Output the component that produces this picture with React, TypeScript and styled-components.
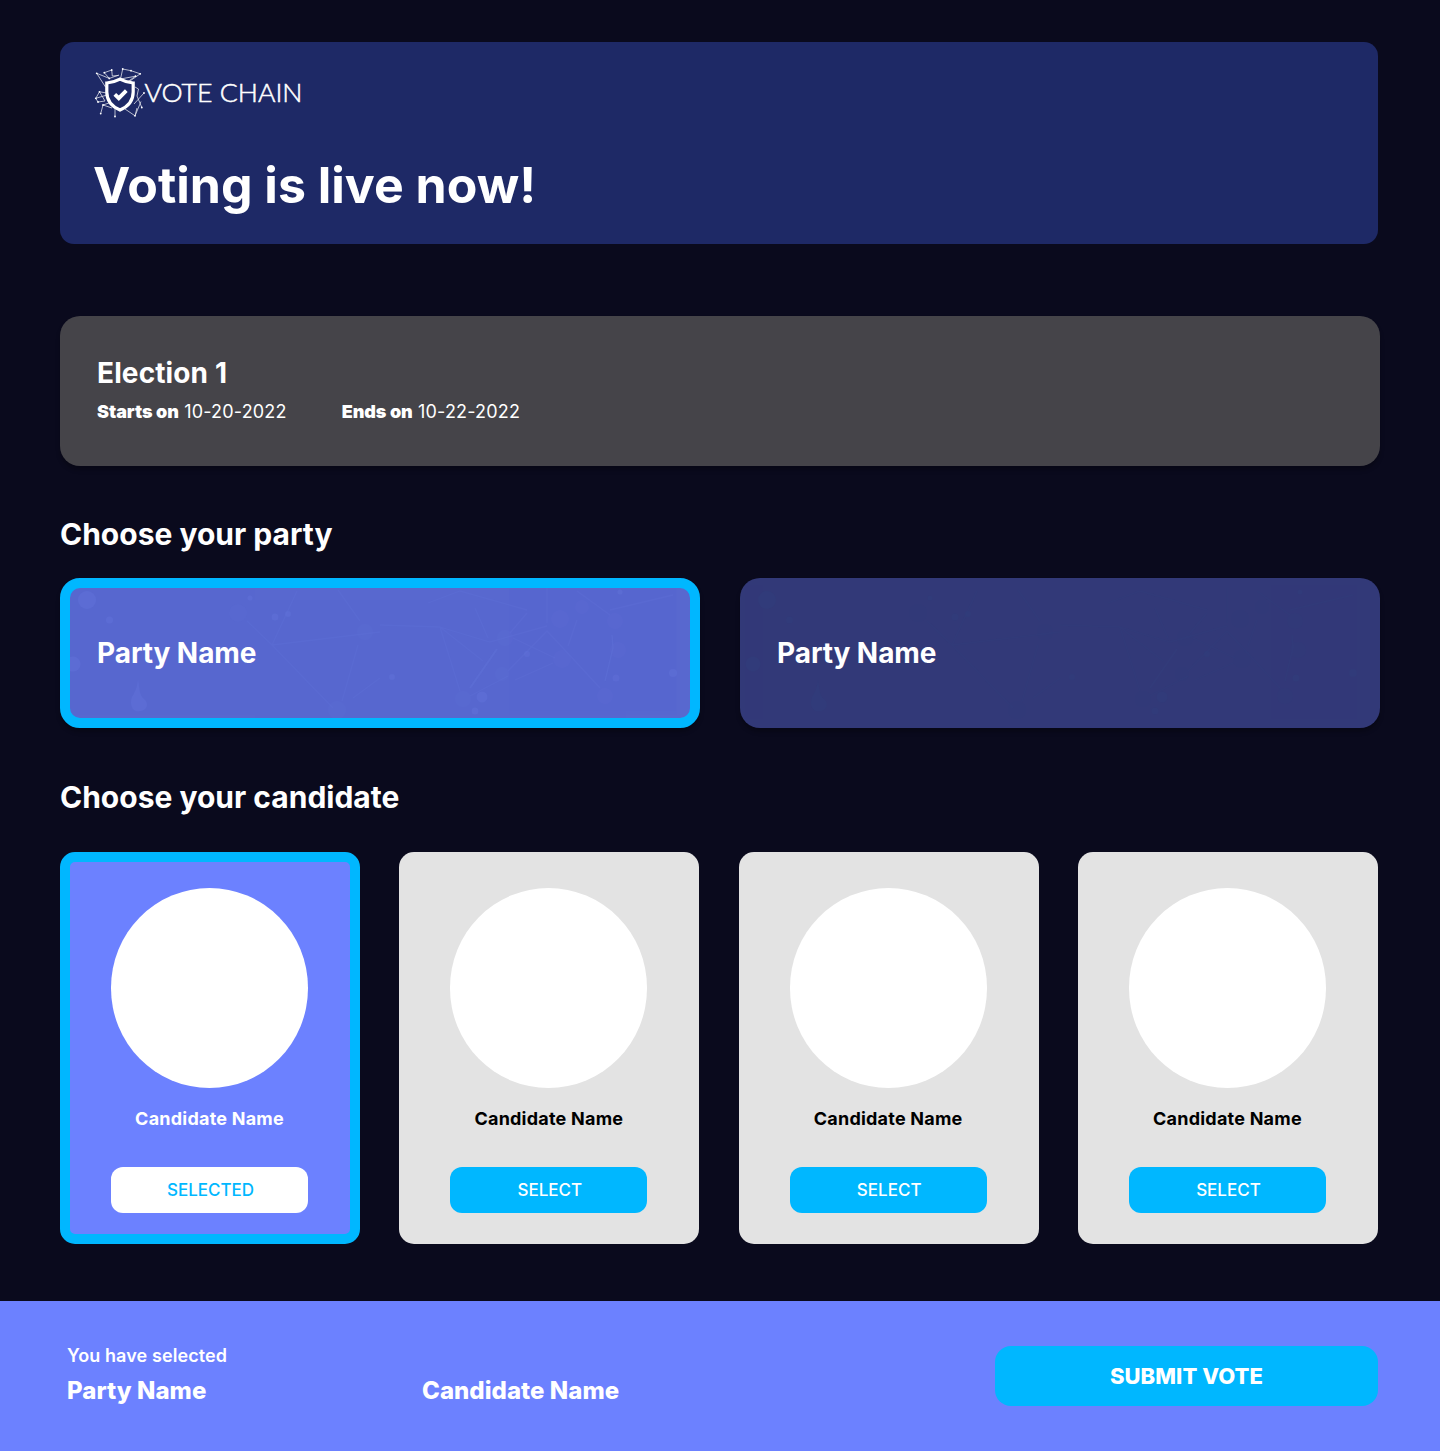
import React, { useState } from "react";
import styled, { createGlobalStyle } from "styled-components";

const GlobalStyle = createGlobalStyle`
  * { box-sizing: border-box; }
  body {
    margin: 0;
    background: #0a0a1d;
    color: #fff;
    font-family: Inter, "Liberation Sans", sans-serif;
  }
  h1, h2, h3, p { margin: 0; }
  button {
    font-family: inherit;
    border: 0;
    padding: 0;
    cursor: pointer;
  }
`;

const Page = styled.div`
  min-height: 1451px;
  display: flex;
  flex-direction: column;
`;

const Content = styled.main`
  width: 1440px;
  height: 1301px;
  padding: 42px 60px 0;
`;

const Hero = styled.header`
  width: 1318px;
  height: 202px;
  padding: 24px 34px 0;
  border-radius: 14px;
  background: #1e2966;
`;

const LogoSvg = styled.svg`
  display: block;
  width: 212px;
  height: 54px;
`;

const HeroTitle = styled.h1`
  margin: 34px 0 0 -1px;
  font-size: 50px;
  line-height: 62px;
  font-weight: 700;
  white-space: nowrap;
`;

const ElectionPanel = styled.section`
  height: 150px;
  margin-top: 72px;
  padding: 40px 37px 0;
  border-radius: 20px;
  background: #454449;
  box-shadow: 0 4px 4px rgba(0, 0, 0, 0.25);
`;

const PanelTitle = styled.h3`
  font-size: 28px;
  line-height: 34px;
  font-weight: 700;
`;

const ElectionTitle = styled(PanelTitle)`
  letter-spacing: 0.12px;
`;

const Dates = styled.div`
  display: flex;
  gap: 55px;
  margin-top: 11px;
  font-size: 18px;
  line-height: 22px;
  letter-spacing: 0.19px;

  b {
    font-weight: 900;
    letter-spacing: -0.06px;
  }
`;

const SectionTitle = styled.h2<{ $top: number }>`
  margin-top: ${(p) => p.$top}px;
  font-size: 30px;
  line-height: 36px;
  font-weight: 700;
`;

const Parties = styled.div`
  display: grid;
  grid-template-columns: 640px 640px;
  gap: 40px;
  margin-top: 26px;
`;

const PartyCard = styled.div<{ $selected: boolean }>`
  position: relative;
  display: flex;
  align-items: center;
  height: 150px;
  padding-left: ${(p) => (p.$selected ? 27 : 37)}px;
  border: ${(p) => (p.$selected ? "10px solid #00b7ff" : "0")};
  border-radius: 20px;
  background: ${(p) => (p.$selected ? "#5868cf" : "#323978")};
  box-shadow: 0 4px 4px rgba(0, 0, 0, 0.25);
  overflow: hidden;
  cursor: pointer;
`;

const Backdrop = styled.svg<{ $selected: boolean }>`
  position: absolute;
  left: ${(p) => (p.$selected ? -10 : 0)}px;
  top: ${(p) => (p.$selected ? -10 : 0)}px;
  width: 640px;
  height: 150px;
  opacity: ${(p) => (p.$selected ? 1 : 0.5)};
  color: ${(p) => (p.$selected ? "#5f71d8" : "#31427f")};
`;

const PartyName = styled(PanelTitle)`
  position: relative;
  letter-spacing: -0.08px;
`;

const Candidates = styled.div`
  display: flex;
  justify-content: space-between;
  width: 1318px;
  margin-top: 37px;
`;

const CandidateCard = styled.article<{ $selected: boolean }>`
  display: flex;
  flex-direction: column;
  align-items: center;
  width: 300px;
  height: 392px;
  padding-top: ${(p) => (p.$selected ? 26 : 36)}px;
  padding-right: 1px;
  border: ${(p) => (p.$selected ? "10px solid #00b7ff" : "0")};
  border-radius: 15px;
  background: ${(p) => (p.$selected ? "#6c81ff" : "#e3e3e3")};
  color: ${(p) => (p.$selected ? "#fff" : "#000")};
`;

const Portrait = styled.div`
  flex: none;
  width: 197px;
  height: 199.5px;
  border-radius: 50%;
  background: #fff;
`;

const CandidateName = styled.p`
  margin-top: 20.5px;
  font-size: 18px;
  line-height: 22px;
  font-weight: 700;
  letter-spacing: 0.22px;
`;

const SelectButton = styled.button<{ $selected: boolean }>`
  width: 197px;
  height: 46px;
  margin-top: 37px;
  padding: 0 0 1px 2px;
  border-radius: 12px;
  background: ${(p) => (p.$selected ? "#fff" : "#00b7ff")};
  color: ${(p) => (p.$selected ? "#00b7ff" : "#fff")};
  font-size: 17px;
  font-weight: 500;
`;

const Footer = styled.footer`
  display: flex;
  width: 1440px;
  height: 150px;
  padding: 44px 62px 0 67px;
  background: #6c81ff;
`;

const Choice = styled.div`
  display: flex;
  flex-direction: column;
  width: 355px;
`;

const ChoiceLabel = styled.p`
  height: 22px;
  font-size: 18px;
  line-height: 22px;
  font-weight: 600;
  letter-spacing: 0.1px;
`;

const ChoiceValue = styled.p`
  margin-top: 9px;
  font-size: 24px;
  line-height: 29px;
  font-weight: 800;
  letter-spacing: 0.05px;
`;

const SubmitButton = styled.button`
  width: 383px;
  height: 60px;
  margin: 1px 0 0 auto;
  border-radius: 16px;
  background: #00b7ff;
  color: #fff;
  font-size: 22px;
  font-weight: 800;
  letter-spacing: 0.05px;
`;

const nodes = [
  [96.7, 73.3], [104.3, 72.7], [111.7, 70], [109.3, 78.4], [122.7, 69], [131, 70.7],
  [140.2, 73.8], [135.5, 76.2], [95.8, 98.3], [99.5, 91.8], [98, 102], [103, 105],
  [100.7, 113.6], [115, 116.5], [135, 115.8], [141.8, 107.5], [144, 93],
];

function Logo() {
  return (
    <LogoSvg viewBox="94 66 212 54" fill="none" stroke="#fff">
      <g strokeWidth="0.75" opacity="0.9">
        <path d="M105.500 87 L96.700 73.300 L109.300 78.400 L119 75" />
        <path d="M104.300 72.700 L111.700 70 L112.300 76 L118.500 75.500 M104.300 72.700 L109.300 78.400" />
        <path d="M122.700 69 L131 70.700 L140.200 73.800 L130 81" />
        <path d="M122.700 69 L120.500 79 L135.500 76.200 L128 81.500" />
        <path d="M107 93 L99.500 91.800 L95.800 98.300 L98 102 L105 101 L99.500 91.800 M95.800 98.300 L107 95" />
        <path d="M109 103 L103 105 L100.700 113.600 M103 105 L112 108" />
        <path d="M115 108 L115 116.500" />
        <path d="M125 109 L135 115.800 L141 101.500 M135 115.800 L137 108" />
        <path d="M135 87 L138.500 89 L137 96 L141.800 107.500 M144 93 L134 104" />
      </g>
      <g fill="#fff" stroke="none">
        {nodes.map(([x, y]) => (
          <circle key={`${x}-${y}`} cx={x} cy={y} r="0.9" />
        ))}
      </g>
      <path d="M120 79.2 C124 81.400 128 82.500 133.200 83 V92 C133.200 100.500 128 106.600 120 110 C112 106.600 106.800 100.500 106.800 92 V83 C112 82.500 116 81.400 120 79.200 Z" fill="#1e2966" strokeWidth="3.2" />
      <path d="M114.800 94.300 L118.800 98.200 L126.300 90.600" strokeWidth="3.800" />
      <text x="144.500" y="101.500" fill="#fff" stroke="#fff" strokeWidth="0.5" fontFamily="Lato, sans-serif" fontWeight="300" fontSize="25" textLength="158" lengthAdjust="spacingAndGlyphs">
        VOTE CHAIN
      </text>
    </LogoSvg>
  );
}

function PartyBackdrop({ selected }: { selected: boolean }) {
  return (
    <Backdrop viewBox="0 0 640 150" $selected={selected} fill="currentColor" stroke="none">
      <g opacity="0.6">
        <circle cx="27" cy="22" r="9" />
        <circle cx="49.500" cy="42" r="3.500" />
        <circle cx="13" cy="86" r="7.500" />
        <path d="M78 102 C80 112 79 117 84 121 C90 126 86 133 80 133 C73 135 69 127 72 119 C75 114 77 110 78 102 Z" />
        <circle cx="215" cy="39" r="3.500" />
        <circle cx="228" cy="36" r="3" />
        <circle cx="190" cy="20" r="2.500" />
        <circle cx="332" cy="99" r="3" />
        <circle cx="422" cy="119" r="5.500" />
        <circle cx="415" cy="133" r="3.500" />
        <circle cx="467" cy="76" r="3" />
        <circle cx="560" cy="14" r="2.500" />
        <circle cx="556" cy="100" r="3.500" />
        <circle cx="613" cy="95" r="4" />
      </g>
      <g opacity="0.15">
        <circle cx="178" cy="35" r="9" />
        <circle cx="277" cy="132" r="9" />
        <circle cx="305" cy="54" r="8" />
        <circle cx="403" cy="121" r="8" />
        <circle cx="500" cy="41" r="9" />
        <circle cx="522" cy="29" r="7" />
        <circle cx="445" cy="60" r="8" />
        <circle cx="502" cy="81" r="9" />
        <circle cx="442" cy="96" r="7" />
        <circle cx="545" cy="118" r="8" />
        <circle cx="558" cy="72" r="8" />
        <circle cx="555" cy="43" r="8" />
      </g>
      <g fill="none" stroke="currentColor" strokeWidth="1.300" opacity="0.34">
        <path d="M187 43 L212 67 L273 130 M212 67 L237 13 M212 67 L320 54" />
        <path d="M282 123 L298 67 M278 12 L300 43 M293 120 L320 100" />
        <path d="M320 47 L380 49 L400 113 M380 49 L430 64 L487 48 M380 49 L423 83 M368 25 L400 13 L467 32" />
        <path d="M415 30 L428 60 M450 55 L467 35 M448 93 L487 53 L503 70 L540 110" />
        <path d="M453 60 L495 80 M455 102 L493 85 M517 42 L508 68 M487 10 L487 45" />
        <path d="M517 13 L550 37 M550 32 L613 17 M410 118 L448 98" />
      </g>
      <path d="M410 110 L437 71" fill="none" stroke="currentColor" strokeWidth="2" opacity="0.5" />
      <path d="M552 57 L553 70 L545 103" fill="none" stroke="currentColor" strokeWidth="1.400" opacity="0.45" />
    </Backdrop>
  );
}

const parties = ["Party Name", "Party Name"];
const candidates = ["Candidate Name", "Candidate Name", "Candidate Name", "Candidate Name"];

export default function App() {
  const [party, setParty] = useState(0);
  const [candidate, setCandidate] = useState(0);

  return (
    <Page>
      <GlobalStyle />
      <Content>
        <Hero>
          <Logo />
          <HeroTitle>Voting is live now!</HeroTitle>
        </Hero>

        <ElectionPanel>
          <ElectionTitle>Election 1</ElectionTitle>
          <Dates>
            <span><b>Starts on</b> 10-20-2022</span>
            <span><b>Ends on</b> 10-22-2022</span>
          </Dates>
        </ElectionPanel>

        <SectionTitle $top={50}>Choose your party</SectionTitle>
        <Parties>
          {parties.map((name, i) => (
            <PartyCard key={i} $selected={i === party} onClick={() => setParty(i)}>
              <PartyBackdrop selected={i === party} />
              <PartyName>{name}</PartyName>
            </PartyCard>
          ))}
        </Parties>

        <SectionTitle $top={51}>Choose your candidate</SectionTitle>
        <Candidates>
          {candidates.map((name, i) => (
            <CandidateCard key={i} $selected={i === candidate}>
              <Portrait />
              <CandidateName>{name}</CandidateName>
              <SelectButton $selected={i === candidate} onClick={() => setCandidate(i)}>
                {i === candidate ? "SELECTED" : "SELECT"}
              </SelectButton>
            </CandidateCard>
          ))}
        </Candidates>
      </Content>

      <Footer>
        <Choice>
          <ChoiceLabel>You have selected</ChoiceLabel>
          <ChoiceValue>{parties[party]}</ChoiceValue>
        </Choice>
        <Choice>
          <ChoiceLabel />
          <ChoiceValue>{candidates[candidate]}</ChoiceValue>
        </Choice>
        <SubmitButton>SUBMIT VOTE</SubmitButton>
      </Footer>
    </Page>
  );
}
